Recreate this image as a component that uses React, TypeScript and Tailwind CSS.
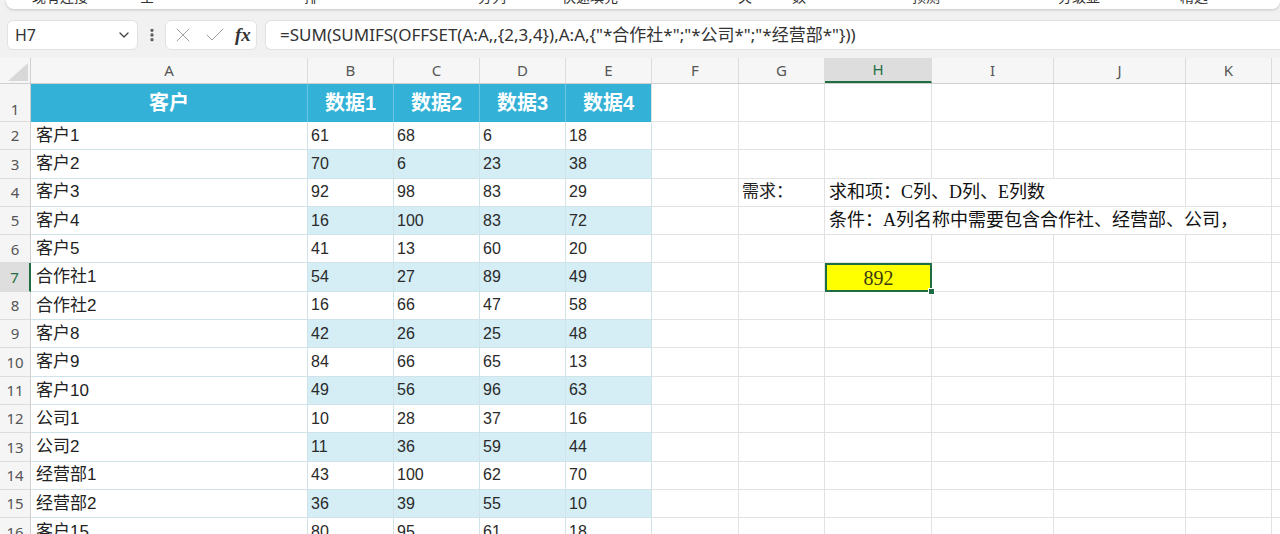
import { Check, ChevronDown, EllipsisVertical, X } from "lucide-react";

const sans = "font-['Liberation_Sans','Noto_Sans_CJK_SC',sans-serif]";
const serif = "font-['Liberation_Serif','Noto_Sans_CJK_SC',serif]";
const ui = "font-['Noto_Sans','Noto_Sans_CJK_SC',sans-serif]";

// A..K fixed widths, L fills the rest
const colWidths = [
    "w-[277px]", "w-[86px]", "w-[86px]", "w-[86px]", "w-[86px]", "w-[87px]",
    "w-[86px]", "w-[107px]", "w-[122px]", "w-[132px]", "w-[86px]",
];
const letters = ["A", "B", "C", "D", "E", "F", "G", "H", "I", "J", "K"];

const data: [string, number, number, number, number][] = [
    ["客户1", 61, 68, 6, 18],
    ["客户2", 70, 6, 23, 38],
    ["客户3", 92, 98, 83, 29],
    ["客户4", 16, 100, 83, 72],
    ["客户5", 41, 13, 60, 20],
    ["合作社1", 54, 27, 89, 49],
    ["合作社2", 16, 66, 47, 58],
    ["客户8", 42, 26, 25, 48],
    ["客户9", 84, 66, 65, 13],
    ["客户10", 49, 56, 96, 63],
    ["公司1", 10, 28, 37, 16],
    ["公司2", 11, 36, 59, 44],
    ["经营部1", 43, 100, 62, 70],
    ["经营部2", 36, 39, 55, 10],
    ["客户15", 80, 95, 61, 18],
];

const ribbon = [
    { ml: "ml-[26px]", t: "现有连接" },
    { ml: "ml-[52px]", t: "全" },
    { ml: "ml-[150px]", t: "排" },
    { ml: "ml-[160px]", t: "分列" },
    { ml: "ml-[56px]", t: "快速填充" },
    { ml: "ml-[120px]", t: "关" },
    { ml: "ml-[40px]", t: "数" },
    { ml: "ml-[106px]", t: "预测" },
    { ml: "ml-[118px]", t: "分级显" },
    { ml: "ml-[80px]", t: "精选" },
];

function gridCell(w: string, extra = "") {
    return `${w} shrink-0 h-full border-r border-b border-[#e2e2e2] ${extra}`;
}

function Row({ r }: { r: number }) {
    const isHeader = r === 1;
    const active = r === 7;
    const d = data[r - 2];
    const cells: React.ReactNode[] = [];

    if (isHeader) {
        ["客户", "数据1", "数据2", "数据3", "数据4"].forEach((t, i) => {
            cells.push(
                <div
                    key={i}
                    className={`${colWidths[i]} shrink-0 h-full flex items-center justify-center bg-[#33b1d7] text-white font-bold text-[20px] ${sans} ${i < 4 ? "border-r border-[#6cc4e0]" : "border-r border-[#e2e2e2]"}`}
                >
                    {t}
                </div>
            );
        });
    } else {
        cells.push(
            <div
                key="a"
                className={`${colWidths[0]} shrink-0 h-full flex items-center pl-[5px] bg-white border-r border-b border-[#d0e3e9] text-[17px] text-[#222] ${sans}`}
            >
                {d[0]}
            </div>
        );
        [d[1], d[2], d[3], d[4]].forEach((v, i) => {
            cells.push(
                <div
                    key={i}
                    className={`${colWidths[i + 1]} shrink-0 h-full flex items-center pl-[3px] border-r border-b border-[#d0e3e9] text-[16px] text-[#2a2a2a] ${sans} ${r % 2 === 1 ? "bg-[#d5edf5]" : "bg-white"}`}
                >
                    {v}
                </div>
            );
        });
    }

    // F
    cells.push(<div key="f" className={gridCell(colWidths[5])} />);

    // G .. L
    if (r === 4) {
        cells.push(
            <div key="g" className={`${gridCell(colWidths[6], "flex items-center pl-[3px] text-[17px] text-[#222]")} ${serif}`}>
                需求：
            </div>
        );
        cells.push(
            <div key="h" className={`w-[361px] shrink-0 h-full border-r border-b border-[#e2e2e2] flex items-center pl-[4px] text-[18px] text-[#111] whitespace-nowrap ${serif}`}>
                求和项：C列、D列、E列数
            </div>
        );
        cells.push(<div key="k" className={gridCell(colWidths[10])} />);
        cells.push(<div key="l" className="flex-1 h-full border-b border-[#e2e2e2]" />);
    } else if (r === 5) {
        cells.push(<div key="g" className={gridCell(colWidths[6])} />);
        cells.push(
            <div key="h" className={`w-[447px] shrink-0 h-full border-r border-b border-[#e2e2e2] flex items-center pl-[4px] text-[18px] text-[#111] whitespace-nowrap ${serif}`}>
                条件：A列名称中需要包含合作社、经营部、公司，
            </div>
        );
        cells.push(<div key="l" className="flex-1 h-full border-b border-[#e2e2e2]" />);
    } else {
        cells.push(<div key="g" className={gridCell(colWidths[6])} />);
        if (active) {
            cells.push(
                <div
                    key="h"
                    className={`${colWidths[7]} shrink-0 h-full relative bg-[#ffff00] border-2 border-[#1f6e43] flex items-center justify-center text-[20px] text-[#3b3a10] ${serif}`}
                >
                    892
                    <span className="absolute -right-[5px] -bottom-[5px] w-[7px] h-[7px] bg-[#1f6e43] border border-white" />
                </div>
            );
        } else {
            cells.push(<div key="h" className={gridCell(colWidths[7])} />);
        }
        cells.push(<div key="i" className={gridCell(colWidths[8])} />);
        cells.push(<div key="j" className={gridCell(colWidths[9])} />);
        cells.push(<div key="k" className={gridCell(colWidths[10])} />);
        cells.push(<div key="l" className="flex-1 h-full border-b border-[#e2e2e2]" />);
    }

    return (
        <div className={`flex ${isHeader ? "h-[38px]" : "h-[28.3px]"}`}>
            <div
                className={`w-[31px] shrink-0 h-full flex justify-center text-[15px] ${ui} border-b border-[#dcdcdc] ${isHeader ? "items-end pb-[1px]" : "items-center"} ${active ? "bg-[#dedede] text-[#1f6e43] border-r-2 border-r-[#1f6e43]" : "bg-[#f5f5f5] text-[#555] border-r border-r-[#cfcfcf]"}`}
            >
                {r}
            </div>
            {cells}
        </div>
    );
}

export default function App() {
    const rows = Array.from({ length: 16 }, (_, i) => i + 1);

    return (
        <div className="w-[1280px] h-[534px] overflow-hidden bg-[#f1f1f1]">
            {/* bottom edge of the ribbon */}
            <div className="ml-[6px] h-[9px] bg-white rounded-b-[8px] shadow-[0_1px_3px_rgba(0,0,0,0.18)] overflow-hidden flex">
                {ribbon.map((item, i) => (
                    <span key={i} className={`${item.ml} -mt-[12px] text-[14px] leading-[18px] text-[#333] whitespace-nowrap ${ui}`}>
                        {item.t}
                    </span>
                ))}
            </div>

            {/* formula bar */}
            <div className="mt-[11px] flex items-center h-[30px]">
                <div className={`ml-[7px] w-[131px] h-full bg-white border border-[#e1e1e1] rounded-[6px] flex items-center justify-between pl-[7px] pr-[5px] text-[16px] text-[#333] ${ui}`}>
                    H7
                    <ChevronDown size={16} strokeWidth={2} className="text-[#444]" />
                </div>
                <div className="w-[27px] flex justify-center">
                    <EllipsisVertical size={16} strokeWidth={3} className="text-[#555]" />
                </div>
                <div className="w-[92px] h-full bg-white border border-[#e1e1e1] rounded-[6px] flex items-center gap-[8px] pl-[5px]">
                    <X size={24} strokeWidth={1} className="text-[#a0a0a0]" />
                    <Check size={24} strokeWidth={1} className="text-[#a0a0a0]" />
                    <span className={`italic font-bold text-[19px] text-[#333] ${serif}`}>fx</span>
                </div>
                <div className={`ml-[8px] flex-1 h-full bg-white border border-r-0 border-[#e1e1e1] rounded-l-[6px] flex items-center pl-[14px] text-[17px] text-[#333] whitespace-nowrap ${ui}`}>
                    =SUM(SUMIFS(OFFSET(A:A,,{"{2,3,4}"}),A:A,{'{"*合作社*";"*公司*";"*经营部*"}'}))
                </div>
            </div>

            {/* column headers */}
            <div className={`mt-[8px] flex h-[26px] bg-[#f6f6f6] border-b border-[#cfcfcf] ${ui} text-[15px] text-[#555]`}>
                <div className="w-[31px] shrink-0 h-full flex items-end justify-end pr-[2px] pb-[2px] border-r border-[#cfcfcf]">
                    <svg width="20" height="18" viewBox="0 0 20 18">
                        <polygon points="20,0 20,18 0,18" fill="#d8d8d8" />
                    </svg>
                </div>
                {colWidths.map((w, i) => (
                    <div
                        key={i}
                        className={`${w} shrink-0 h-full flex items-center justify-center border-r border-[#dcdcdc] ${i === 7 ? "bg-[#dddddd] text-[#1f6e43] border-b-2 border-b-[#1f6e43]" : ""}`}
                    >
                        {letters[i]}
                    </div>
                ))}
                <div className="flex-1 h-full" />
            </div>

            {/* sheet */}
            <div className="bg-white">
                {rows.map(r => (
                    <Row key={r} r={r} />
                ))}
            </div>
        </div>
    );
}
